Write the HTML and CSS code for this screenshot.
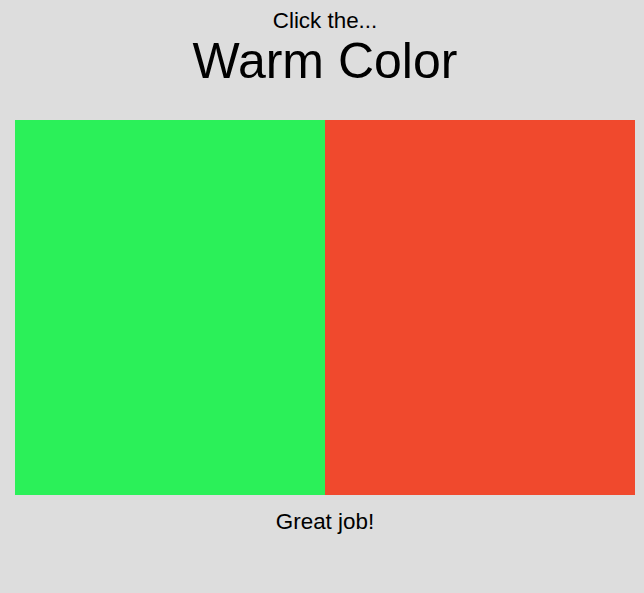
FILE: index.html
```html
<!DOCTYPE html>
<html>
<head>
<meta charset="utf-8">
<link rel="stylesheet" href="styles.css">
</head>
<body>
<main class="game">
  <div class="prompt">Click the...</div>
  <h1 class="target">Warm Color</h1>
  <div class="choices">
    <div class="swatch green"></div>
    <div class="swatch red"></div>
  </div>
  <div class="result">Great job!</div>
</main>
</body>
</html>
```
FILE: styles.css
```css
html, body {
  background: #dddddd;
}
body {
  margin: 8px;
  font-family: "Liberation Sans", Arial, sans-serif;
  color: #000;
}
.game {
  width: 620px;
  margin-left: 7px;
  text-align: center;
}
.prompt {
  font-size: 22.4px;
}
.target {
  font-size: 50px;
  font-weight: normal;
  margin: -2px 0 0;
}
.choices {
  display: flex;
  margin-top: 30px;
  height: 375px;
}
.swatch {
  flex: 1;
}
.green {
  background: #2bf059;
}
.red {
  background: #f0492d;
}
.result {
  font-size: 22.4px;
  margin-top: 13.5px;
}
```
